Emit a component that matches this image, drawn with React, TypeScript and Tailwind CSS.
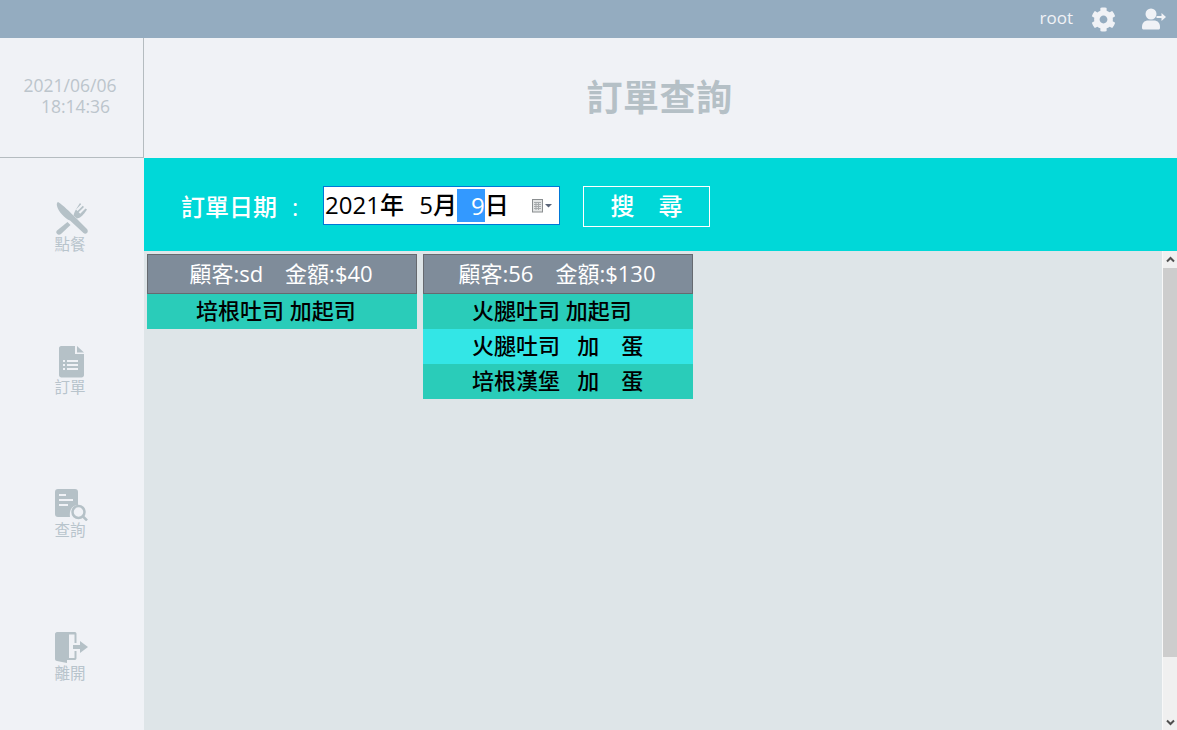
import { FaCog } from "react-icons/fa";

const cjk = "font-['Open_Sans','Noto_Sans_CJK_TC',sans-serif]";

function Cutlery() {
  return (
    <svg width="33" height="33" viewBox="0 0 33 33" fill="#b5c1c7">
      <path d="M3 0 C8 3 15 10 21 16 L32 27 C33 28.500 33 30 32 31 C31 32 29.500 32 28.500 31 L15 18.500 C10 17 3 9 2 4 C1.500 2 2 0.500 3 0 Z" />
      <path d="M12.500 20 L15.500 23 L6 32 C4.500 33 3 32.800 2 31.800 C1 30.800 1 29.500 2 28.500 Z" />
      <path d="M25 1 L26.200 2.200 L21 7.500 L22.500 9 L27.800 3.700 L29 4.900 L23.700 10.200 L25.200 11.700 L30.500 6.400 L32 7.600 C30 11 26.500 15 24.500 15.800 L22 16.500 L18.500 13.500 C19 11 20 9 21.500 6.500 Z" />
    </svg>
  );
}

function DocList() {
  return (
    <svg width="25" height="33" viewBox="0 0 25 33" fill="#b5c1c7">
      <path d="M2 1 H16 V9 H25 V30 C25 31.500 24 32.500 22.500 32.500 H2.500 C1 32.500 0 31.500 0 30 V3 C0 2 1 1 2 1 Z" />
      <path d="M18 1 L25 7.500 H18 Z" />
      <g fill="#f0f2f6">
        <rect x="4" y="15" width="2" height="2" />
        <rect x="4" y="19" width="2" height="2" />
        <rect x="4" y="23" width="2" height="2" />
        <rect x="8" y="15" width="11" height="2" />
        <rect x="8" y="19" width="11" height="2" />
        <rect x="8" y="23" width="11" height="2" />
      </g>
    </svg>
  );
}

function DocSearch() {
  return (
    <svg width="33" height="33" viewBox="0 0 33 33">
      <path d="M3 1 H20 C22 1 23 2 23 4 V17 C18 17 14 21 15 29 H3 C1 29 0 28 0 26 V4 C0 2 1 1 3 1 Z" fill="#b5c1c7" />
      <rect x="4" y="6" width="7" height="2" fill="#f0f2f6" />
      <rect x="4" y="11" width="14" height="2" fill="#f0f2f6" />
      <rect x="4" y="16" width="9" height="2" fill="#f0f2f6" />
      <circle cx="23.500" cy="24" r="6" fill="none" stroke="#b5c1c7" strokeWidth="2.500" />
      <path d="M28 28.500 L32 32.500" stroke="#b5c1c7" strokeWidth="2.500" />
    </svg>
  );
}

function ExitDoor() {
  return (
    <svg width="33" height="33" viewBox="0 0 33 33" fill="#b5c1c7">
      <path d="M2 1 H20 C21 1 21.500 2 21.500 3 V12 H19.500 V3.500 H14 V29 H12 V32 L2 30 C1 30 0 29 0 28 V3 C0 2 1 1 2 1 Z" />
      <path d="M19.500 20 H21.500 V27 C21.500 28.500 20.500 29 19.500 29 H14 V27 H19.500 Z" />
      <path d="M18 14 H25 V10 L33 16 L25 22 V18 H18 Z" />
    </svg>
  );
}

function UserExit() {
  return (
    <svg width="24" height="22" viewBox="0 0 24 22" fill="#f0f2f6">
      <circle cx="9" cy="6" r="5.500" />
      <path d="M0 19 C0 14.500 3 12.500 6 12.500 H12 C15 12.500 18 14.500 18 19 V20 C18 21 17 21.500 16 21.500 H2 C1 21.500 0 21 0 20 Z" />
      <path d="M14.500 8 H19.500 V5 L24 9 L19.500 13 V10 H14.500 Z" />
    </svg>
  );
}

function NavItem({ icon, label }: { icon: React.ReactNode; label: string }) {
  return (
    <div className="flex h-[144px] flex-col items-center pt-[44px] pr-[4px]">
      <div className="flex h-[33px] items-end pl-[3px]">{icon}</div>
      <span className="mt-[-1px] text-[15.500px] leading-[20px] text-[#b8c4cc]">{label}</span>
    </div>
  );
}

function OrderCard({ head, rows }: { head: string; rows: string[] }) {
  return (
    <div className="w-[270px]">
      <div className="flex h-[40px] items-center justify-center border border-[#666a70] bg-[#7f8c9a] pr-[2px] pb-[2px] text-[22px] whitespace-pre text-white">
        {head}
      </div>
      {rows.map((r, i) => (
        <div
          key={r}
          className={`flex h-[35px] items-center pb-[2px] pl-[49px] text-[22px] font-medium whitespace-pre text-black ${
            i % 2 === 1 ? "bg-[#33e6e6]" : "bg-[#2accb9]"
          }`}
        >
          {r}
        </div>
      ))}
    </div>
  );
}

export default function App() {
  return (
    <div className={`flex h-[730px] w-[1177px] flex-col overflow-hidden bg-[#f0f2f6] ${cjk}`}>
      <header className="flex h-[38px] shrink-0 items-center justify-end bg-[#94acc0] pr-[11px]">
        <span className="mb-[2px] text-[17px] text-[#f0f2f6]">root</span>
        <FaCog className="ml-[18px] text-[#f0f2f6]" size={25} />
        <div className="ml-[26px] flex">
          <UserExit />
        </div>
      </header>
      <div className="flex min-h-0 flex-1">
        <aside className="flex w-[144px] shrink-0 flex-col">
          <div className="flex h-[120px] shrink-0 flex-col items-center justify-center border-r border-b border-[#b5bcc0] pr-[3px] pb-[3px] text-[17.500px] leading-[21px] text-[#bcc5cc]">
            <span>2021/06/06</span>
            <span className="pl-[11px]">18:14:36</span>
          </div>
          <NavItem icon={<Cutlery />} label="點餐" />
          <NavItem icon={<DocList />} label="訂單" />
          <NavItem icon={<DocSearch />} label="查詢" />
          <NavItem icon={<ExitDoor />} label="離開" />
        </aside>
        <main className="flex min-w-0 flex-1 flex-col">
          <div className="flex h-[120px] shrink-0 items-center justify-center pr-[2px] text-[36px] font-bold tracking-[0.5px] text-[#b5c0c6]">
            訂單查詢
          </div>
          <div className="flex h-[93px] shrink-0 items-start bg-[#00d8d8] pt-[28px] pl-[37px]">
            <span className="mt-[3px] w-[142px] text-[24px] leading-[36px] font-medium whitespace-pre text-white">
              訂單日期<span className="ml-[15px]">:</span>
            </span>
            <div className="flex h-[39px] w-[237px] items-center border border-[#0078d7] bg-white pb-[2px] pl-[1px] text-[24px] font-medium whitespace-pre text-black">
              <span>2021年  </span>
              <span className="ml-[3px]">5月</span>
              <span className="mt-[2px] bg-[#3399ff] pl-[14px] leading-[33px] font-normal text-white">9</span>
              <span>日</span>
              <svg className="mt-[2px] mr-[5px] ml-auto" width="22" height="14" viewBox="0 0 22 14">
                <rect x="0.500" y="0.500" width="10" height="12.500" fill="#e4e6e6" stroke="#8a8e90" />
                <path d="M2 3.500 H9 M2 5.500 H9 M2 7.500 H9 M2 9.500 H9 M4 3 V11 M6.500 3 V11" stroke="#a6aaac" />
                <path d="M13 5 H20 L16.500 8.500 Z" fill="#5a6478" />
              </svg>
            </div>
            <div className="ml-[23px] flex h-[41px] w-[127px] items-center justify-center border border-white pb-[2px] text-[24px] font-medium whitespace-pre text-white">
              搜　尋
            </div>
          </div>
          <div className="flex min-h-0 flex-1 bg-[#dee5e8]">
            <div className="flex flex-1 items-start gap-[6px] pt-[3px] pl-[3px]">
              <OrderCard head="顧客:sd　金額:$40" rows={["培根吐司 加起司"]} />
              <OrderCard head="顧客:56　金額:$130" rows={["火腿吐司 加起司", "火腿吐司   加　蛋", "培根漢堡   加　蛋"]} />
            </div>
            <div className="flex w-[15px] shrink-0 flex-col border-l border-[#f8f8f8] bg-[#f0f0f0]">
              <div className="flex h-[17px] shrink-0 items-center justify-center">
                <svg width="9" height="7" viewBox="0 0 9 7">
                  <path d="M1 5.500 L4.500 2 L8 5.500" fill="none" stroke="#505050" strokeWidth="2" />
                </svg>
              </div>
              <div className="h-[389px] shrink-0 bg-[#cdcdcd]" />
              <div className="flex flex-1 items-end justify-center pb-[4px]">
                <svg width="9" height="7" viewBox="0 0 9 7">
                  <path d="M1 1.500 L4.500 5 L8 1.500" fill="none" stroke="#505050" strokeWidth="2" />
                </svg>
              </div>
            </div>
          </div>
        </main>
      </div>
    </div>
  );
}
